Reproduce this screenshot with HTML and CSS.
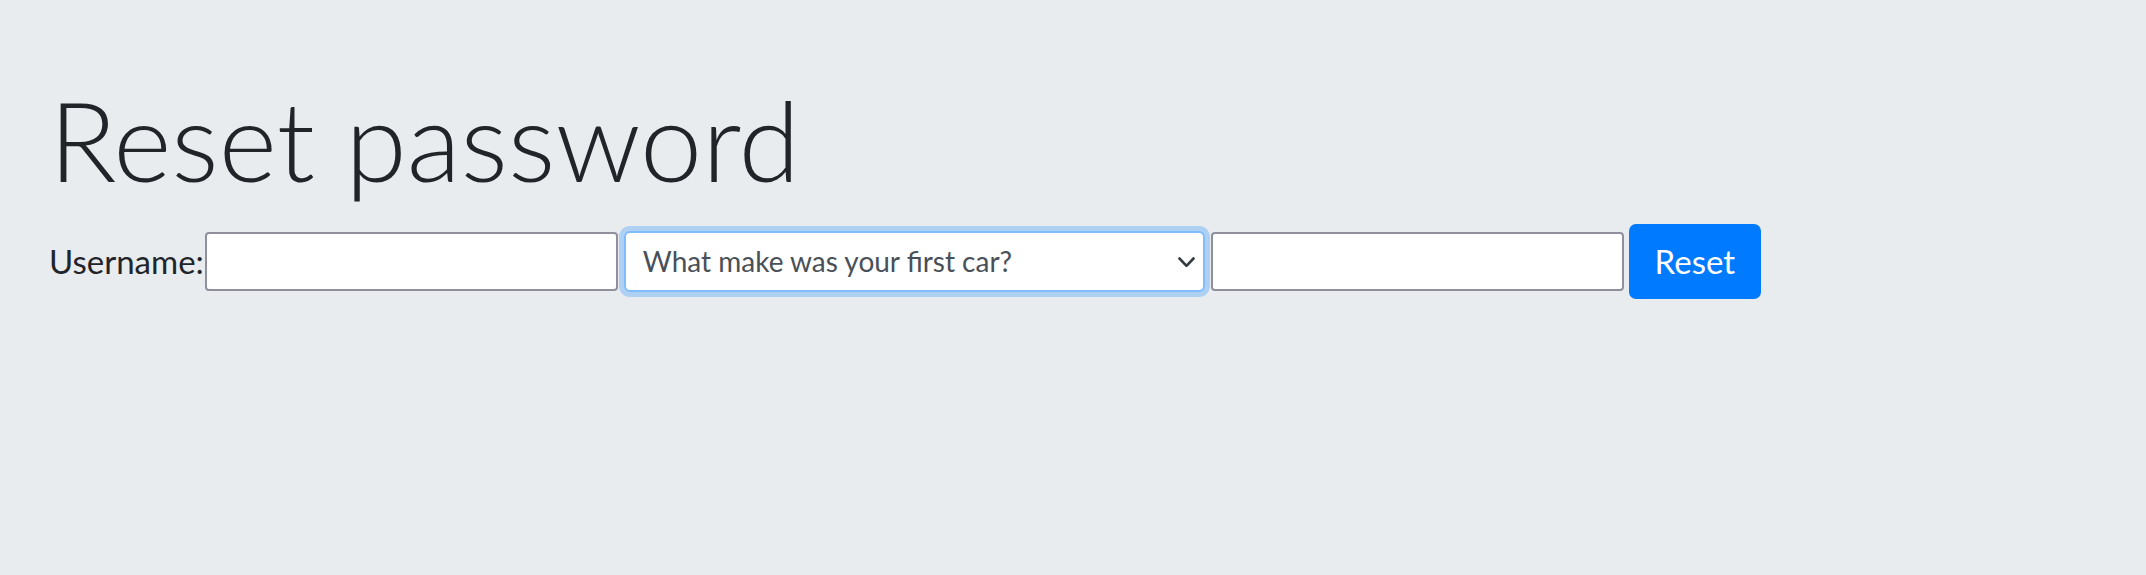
FILE: index.html
```html
<!DOCTYPE html>
<html lang="en">
<head>
<meta charset="utf-8">
<title>Reset password</title>
<link rel="stylesheet" href="styles.css">
</head>
<body>
<main class="page">
  <h1 class="title">Reset password</h1>
  <form class="reset-form">
    <label class="label" for="username">Username:</label>
    <input class="field field-user" id="username" type="text">
    <div class="select-wrap">
      <select class="question">
        <option>What make was your first car?</option>
      </select>
      <svg class="chevron" viewBox="0 0 17 11" width="17" height="11" aria-hidden="true"><polyline points="1.5,1.5 8.5,8.9 15.5,1.5" fill="none" stroke="#343a40" stroke-width="2.6" stroke-linecap="round" stroke-linejoin="round"/></svg>
    </div>
    <input class="field field-answer" type="text">
    <button class="btn" type="button">Reset</button>
  </form>
</main>
</body>
</html>
```

FILE: styles.css
```css
html, body {
  margin: 0;
  padding: 0;
}
body {
  background: #e9ecef;
  color: #212529;
  font-family: Lato, "Noto Sans", sans-serif;
  height: 575px;
  overflow: hidden;
}
.page {
  padding: 73px 0 0 49px;
}
.title {
  margin: 0;
  font-size: 111.5px;
  font-weight: 300;
  line-height: 1.2;
  color: #212529;
}
.reset-form {
  display: flex;
  align-items: center;
  margin-top: 17px;
}
.label {
  font-size: 33px;
  line-height: 1.2;
  margin-right: 1px;
}
.field {
  box-sizing: border-box;
  height: 59px;
  border: 2px solid #8f8f9d;
  border-radius: 4px;
  background: #fff;
  padding: 0 8px;
  font-family: inherit;
  font-size: 28px;
}
.field-user {
  width: 413px;
}
.field-answer {
  width: 413px;
}
.select-wrap {
  position: relative;
  margin: 0 6px;
}
.question {
  box-sizing: border-box;
  display: block;
  width: 581px;
  height: 61px;
  appearance: none;
  -webkit-appearance: none;
  background: #fff;
  border: 2px solid #80bdff;
  border-radius: 6px;
  box-shadow: 0 0 0 5px rgba(0, 123, 255, 0.25);
  padding: 0 48px 0 17px;
  font-family: Lato, "Noto Sans", sans-serif;
  font-size: 28px;
  color: #495057;
  outline: none;
}
.chevron {
  position: absolute;
  right: 10px;
  top: 26px;
  pointer-events: none;
}
.btn {
  box-sizing: border-box;
  margin-left: 5px;
  width: 132px;
  height: 75px;
  border: none;
  border-radius: 7px;
  background: #007bff;
  color: #fff;
  font-family: Lato, "Noto Sans", sans-serif;
  font-size: 33px;
  padding: 0;
}
```
